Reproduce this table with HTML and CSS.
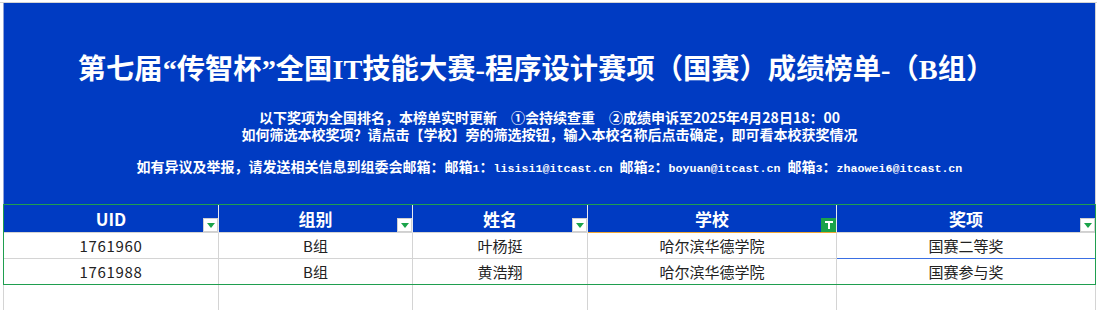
FILE: index.html
```html
<!DOCTYPE html>
<html lang="zh-CN">
<head>
<meta charset="utf-8">
<title>成绩榜单</title>
<link rel="stylesheet" href="styles.css">
</head>
<body>
<div class="topgutter"></div>
<div class="sheet">
  <div class="banner">
    <div class="title">第七届“传智杯”全国IT技能大赛-程序设计赛项（国赛）成绩榜单-（B组）</div>
    <div class="line l1">以下奖项为全国排名，本榜单实时更新　①会持续查重　②成绩申诉至2025年4月28日18：00</div>
    <div class="line l2">如何筛选本校奖项？请点击【学校】旁的筛选按钮，输入本校名称后点击确定，即可看本校获奖情况</div>
    <div class="line l3">如有异议及举报，请发送相关信息到组委会邮箱：邮箱<span class="mono">1</span>：<span class="mono">lisisi1@itcast.cn </span>邮箱<span class="mono">2</span>：<span class="mono">boyuan@itcast.cn </span>邮箱<span class="mono">3</span>：<span class="mono">zhaowei6@itcast.cn</span></div>
  </div>
  <div class="table">
    <div class="cell head">UID<span class="filter"><svg width="8" height="5" viewBox="0 0 8 5"><path d="M0 0H8L4 5Z" fill="#1aa34a"/></svg></span></div>
    <div class="cell head">组别<span class="filter"><svg width="8" height="5" viewBox="0 0 8 5"><path d="M0 0H8L4 5Z" fill="#1aa34a"/></svg></span></div>
    <div class="cell head">姓名<span class="filter"><svg width="8" height="5" viewBox="0 0 8 5"><path d="M0 0H8L4 5Z" fill="#1aa34a"/></svg></span></div>
    <div class="cell head orange">学校<span class="filter active"><svg width="8" height="8" viewBox="0 0 8 8"><path d="M0 0H8V2H5V8H3V2H0Z" fill="#ffffff"/></svg></span></div>
    <div class="cell head last">奖项<span class="filter"><svg width="8" height="5" viewBox="0 0 8 5"><path d="M0 0H8L4 5Z" fill="#1aa34a"/></svg></span></div>

    <div class="cell data num">1761960</div>
    <div class="cell data">B组</div>
    <div class="cell data">叶杨挺</div>
    <div class="cell data">哈尔滨华德学院</div>
    <div class="cell data last bluebottom">国赛二等奖</div>

    <div class="cell data num r2">1761988</div>
    <div class="cell data r2">B组</div>
    <div class="cell data r2">黄浩翔</div>
    <div class="cell data r2">哈尔滨华德学院</div>
    <div class="cell data r2 last">国赛参与奖</div>
  </div>
  <div class="blank">
    <div class="bcell"></div>
    <div class="bcell"></div>
    <div class="bcell"></div>
    <div class="bcell"></div>
    <div class="bcell"></div>
  </div>
</div>
</body>
</html>
```

FILE: styles.css
```css
html, body {
  margin: 0;
  padding: 0;
  background: #ffffff;
}
body {
  width: 1097px;
  height: 310px;
  overflow: hidden;
  font-family: "Noto Sans CJK SC", "Noto Sans", sans-serif;
}
.topgutter {
  height: 2px;
  border-bottom: 1px solid #d4d4d4;
}
.sheet {
  margin-left: 3px;
  width: 1093px;
}
.banner {
  box-sizing: border-box;
  height: 201px;
  background: #003bc2;
  border-left: 1px solid #8ea2d8;
  border-right: 1px solid #d4d4d4;
  color: #ffffff;
  display: flex;
  flex-direction: column;
  align-items: center;
  padding-top: 50px;
}
.title {
  font-family: "Liberation Serif", "Noto Sans CJK SC", serif;
  font-weight: 700;
  font-size: 28.3px;
  line-height: 34px;
  white-space: nowrap;
  padding-right: 27px;
}
.line {
  font-weight: 700;
  font-size: 14px;
  line-height: 16px;
  white-space: nowrap;
}
.l1 {
  margin-top: 22px;
}
.l2 {
  margin-top: 1px;
}
.l3 {
  margin-top: 16px;
}
.mono {
  font-family: "Liberation Mono", monospace;
  font-size: 11.67px;
  font-weight: 700;
}
.table {
  display: grid;
  grid-template-columns: 215px 194px 175px 249px 258px;
  grid-template-rows: 28px 26px 25px;
  border: 1px solid #1f9e4f;
}
.cell {
  box-sizing: border-box;
  position: relative;
  display: flex;
  align-items: center;
  justify-content: center;
  border-right: 1px solid #d4d4d4;
  white-space: nowrap;
}
.cell.last {
  border-right: none;
}
.head {
  background: #003bc2;
  color: #ffffff;
  font-weight: 700;
  font-size: 17px;
  border-right-color: #e6e9f2;
  border-bottom: 1px solid #d4d4d4;
}
.head.orange {
  border-bottom-color: #f0a733;
}
.data {
  color: #222222;
  font-size: 15px;
  border-bottom: 1px solid #d4d4d4;
}
.data.num {
  letter-spacing: 0.7px;
}
.data.r2 {
  border-bottom: none;
}
.data.bluebottom {
  border-bottom-color: #3a6fe3;
}
.filter {
  position: absolute;
  right: 0;
  bottom: 0;
  box-sizing: border-box;
  width: 15px;
  height: 14px;
  background: #ffffff;
  border: 1px solid #d0d0d0;
  display: flex;
  align-items: center;
  justify-content: center;
}
.filter.active {
  background: #1aa34a;
  border-color: #1aa34a;
}
.blank {
  display: grid;
  grid-template-columns: 215px 194px 175px 249px 258px;
  border-left: 1px solid #d4d4d4;
  border-right: 1px solid #d4d4d4;
  height: 30px;
}
.bcell {
  border-right: 1px solid #d4d4d4;
}
.bcell:last-child {
  border-right: none;
}
```
